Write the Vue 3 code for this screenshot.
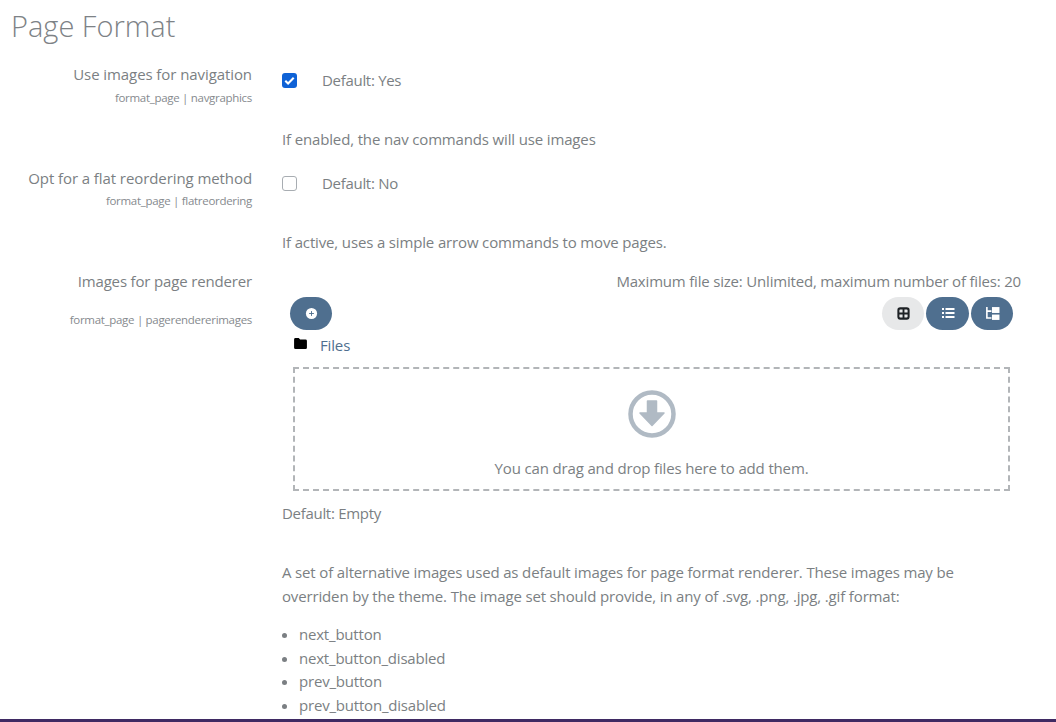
<script setup>
const items = ['next_button', 'next_button_disabled', 'prev_button', 'prev_button_disabled']
</script>

<template>
  <div class="page">
    <main class="main">
      <h2 class="title">Page Format</h2>

      <section class="row row-one">
        <div class="label">
          <div class="name">Use images for navigation</div>
          <div class="key">format_page | navgraphics</div>
        </div>
        <div class="field">
          <div class="check-line">
            <span class="box on">
              <svg viewBox="0 0 16 16" width="15" height="15"><path d="M3.5 8.2l3 3 6-6.2" fill="none" stroke="#fff" stroke-width="2.2"/></svg>
            </span>
            <span class="default">Default: Yes</span>
          </div>
          <p class="desc">If enabled, the nav commands will use images</p>
        </div>
      </section>

      <section class="row row-two">
        <div class="label">
          <div class="name">Opt for a flat reordering method</div>
          <div class="key">format_page | flatreordering</div>
        </div>
        <div class="field">
          <div class="check-line">
            <span class="box"></span>
            <span class="default">Default: No</span>
          </div>
          <p class="desc">If active, uses a simple arrow commands to move pages.</p>
        </div>
      </section>

      <section class="row row-three">
        <div class="label">
          <div class="name">Images for page renderer</div>
          <div class="key key-three">format_page | pagerendererimages</div>
        </div>
        <div class="field">
          <div class="limits">Maximum file size: Unlimited, maximum number of files: 20</div>
          <div class="toolbar">
            <span class="btn add">
              <svg viewBox="0 0 14 14" width="13" height="13">
                <circle cx="7" cy="7" r="6" fill="#fff"/>
                <path d="M7 4.4v5.2M4.4 7h5.2" stroke="#4f6f8f" stroke-width="1"/>
              </svg>
            </span>
            <div class="views">
              <span class="btn view active">
                <svg viewBox="0 0 14 14" width="13" height="13">
                  <rect x="1.500" y="1.500" width="11" height="11" rx="2" fill="none" stroke="#1d2125" stroke-width="2.200"/>
                  <path d="M7 2v10M2 7h10" stroke="#1d2125" stroke-width="2"/>
                </svg>
              </span>
              <span class="btn view">
                <svg viewBox="0 0 14 14" width="14" height="14" fill="#fff">
                  <rect x="1" y="2" width="2" height="2"/><rect x="4.500" y="2" width="9" height="2"/>
                  <rect x="1" y="6" width="2" height="2"/><rect x="4.500" y="6" width="9" height="2"/>
                  <rect x="1" y="10" width="2" height="2"/><rect x="4.500" y="10" width="9" height="2"/>
                </svg>
              </span>
              <span class="btn view tree">
                <svg viewBox="0 0 14 14" width="15" height="15" fill="#fff">
                  <path d="M1 1h1.500v3H6v1.500H2.500v5H6V12H1z"/>
                  <rect x="6.500" y="1" width="7" height="5.500"/>
                  <rect x="6.500" y="8" width="7" height="5"/>
                </svg>
              </span>
            </div>
          </div>
          <div class="path">
            <svg class="folder" viewBox="0 0 14 12" width="13" height="11">
              <path d="M1.500 0h3.600l1.500 1.600h5.900A1.500 1.500 0 0 1 14 3v7.500a1.500 1.500 0 0 1-1.500 1.500h-11A1.500 1.500 0 0 1 0 10.500V1.500A1.500 1.500 0 0 1 1.500 0z" fill="#000"/>
            </svg>
            <span class="files">Files</span>
          </div>
          <div class="drop">
            <svg viewBox="0 0 48 48" width="48" height="48">
              <circle cx="24" cy="24" r="21.500" fill="none" stroke="#b0bac4" stroke-width="4.500"/>
              <path d="M19.500 11h9v12h7.500L24 35.500 12 23h7.500z" fill="#b0bac4" stroke="#b0bac4" stroke-width="1.500" stroke-linejoin="round"/>
            </svg>
            <div class="drop-text">You can drag and drop files here to add them.</div>
          </div>
          <div class="default empty">Default: Empty</div>
          <p class="desc long">A set of alternative images used as default images for page format renderer. These images may be overriden by the theme. The image set should provide, in any of .svg, .png, .jpg, .gif format:</p>
          <ul class="list">
            <li v-for="item in items" :key="item">{{ item }}</li>
          </ul>
        </div>
      </section>
    </main>
    <footer class="bar"></footer>
  </div>
</template>

<style>
html, body { margin: 0; background: #fff; }
</style>

<style scoped>
.page {
  width: 1056px;
  height: 722px;
  display: flex;
  flex-direction: column;
  overflow: hidden;
  background: #fff;
  font-family: "Open Sans", "Noto Sans", sans-serif;
  font-size: 15px;
  line-height: 22.5px;
  letter-spacing: -0.15px;
  color: #7b7f83;
}
.main { flex: 1; min-height: 0; overflow: hidden; padding: 0 35px 0 11px; }
.title {
  margin: 0;
  padding-top: 8px;
  height: 52px;
  box-sizing: border-box;
  font-weight: 300;
  font-size: 29px;
  line-height: 36px;
  letter-spacing: 0;
  color: #7d8286;
}
.row { display: grid; grid-template-columns: 241px 1fr; column-gap: 30px; }
.row-one { height: 93px; padding-top: 11px; }
.row-two { height: 103px; padding-top: 11px; }
.label { text-align: right; }
.name { white-space: nowrap; letter-spacing: -0.08px; }
.row-three .name { letter-spacing: -0.16px; }
.key { font-size: 11.500px; line-height: 17px; letter-spacing: -0.3px; margin-top: 2px; color: #868a8e; white-space: nowrap; }
.row-one .key { margin-top: 3px; }
.key-three { margin-top: 18px; }
.check-line { display: flex; align-items: center; height: 24px; margin-top: 5px; }
.row-two .check-line { margin-top: 4px; }
.box {
  width: 15px; height: 15px; box-sizing: border-box;
  border: 1px solid #a8adb2; border-radius: 3px; background: #fff;
  display: flex; align-items: center; justify-content: center;
}
.box.on { background: #0f62d6; border: 0; }
.default { margin-left: 25px; letter-spacing: -0.3px; }
.empty { margin: 11px 0 0; }
.desc { margin: 0; }
.check-line + .desc { margin-top: 36px; }
.limits { text-align: right; letter-spacing: -0.19px; }
.toolbar { display: flex; justify-content: space-between; align-items: center; padding: 4px 8px 0 8px; }
.views { display: flex; gap: 2px; }
.btn { height: 33px; border-radius: 17px; background: #4f6f8f; display: flex; align-items: center; justify-content: center; }
.add { width: 42px; }
.view { width: 43px; }
.view.active { background: #e7e8e9; width: 42px; }
.view.tree { width: 42px; }
.path { display: flex; align-items: center; height: 24px; padding-left: 12px; margin-top: 4px; }
.files { margin-left: 13px; color: #4f6f8f; }
.folder { margin-top: -4px; }
.drop {
  margin: 9px 11px 0 11px;
  height: 124px;
  box-sizing: border-box;
  border: 2px dashed #b2b5b8;
  display: flex; flex-direction: column; align-items: center;
  padding-top: 21px;
}
.drop-text { margin-top: 19px; }
.long { margin-top: 36px; line-height: 24px; padding-right: 10px; }
.list { margin: 15px 0 0; padding-left: 17px; line-height: 23.600px; letter-spacing: -0.2px; }
.list li::marker { color: #7b7f83; }
.bar { height: 3px; flex: none; background: #3f2a63; }
</style>
